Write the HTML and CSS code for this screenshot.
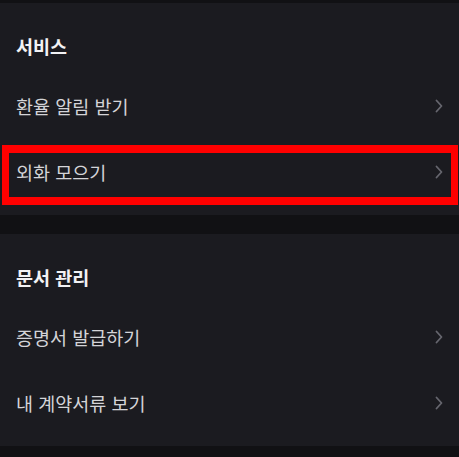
FILE: index.html
```html
<!DOCTYPE html>
<html lang="ko">
<head>
<meta charset="UTF-8">
<meta name="viewport" content="width=device-width, initial-scale=1.0">
<title>서비스</title>
<link rel="stylesheet" href="styles.css">
</head>
<body>

<div class="page">
    <!-- 서비스 -->
    <section class="card">
        <h2 class="card-title">서비스</h2>
        <a class="row" href="#">
            <span class="row-label">환율 알림 받기</span>
            <svg class="chevron" viewBox="0 0 8 14" width="8" height="14"><path d="M1.5 1.5 L6.5 7 L1.5 12.5"/></svg>
        </a>
        <a class="row row-selected" href="#">
            <span class="row-label">외화 모으기</span>
            <svg class="chevron" viewBox="0 0 8 14" width="8" height="14"><path d="M1.5 1.5 L6.5 7 L1.5 12.5"/></svg>
            <span class="highlight"></span>
        </a>
    </section>

    <!-- 문서 관리 -->
    <section class="card">
        <h2 class="card-title">문서 관리</h2>
        <a class="row" href="#">
            <span class="row-label">증명서 발급하기</span>
            <svg class="chevron" viewBox="0 0 8 14" width="8" height="14"><path d="M1.5 1.5 L6.5 7 L1.5 12.5"/></svg>
        </a>
        <a class="row" href="#">
            <span class="row-label">내 계약서류 보기</span>
            <svg class="chevron" viewBox="0 0 8 14" width="8" height="14"><path d="M1.5 1.5 L6.5 7 L1.5 12.5"/></svg>
        </a>
    </section>
</div>

</body>
</html>
```

FILE: styles.css
```css
body {
    margin: 0;
    background-color: #111114;
    font-family: "Noto Sans CJK KR", "Noto Sans", sans-serif;
}

.page {
    display: flex;
    flex-direction: column;
    gap: 19px;
    padding-top: 3px;
}

.card {
    background-color: #1b1b20;
    padding: 28px 0 10px;
}

.card-title {
    margin: 0 0 12px;
    padding: 0 16px;
    font-size: 18.5px;
    line-height: 30px;
    font-weight: 700;
    color: #f2f2f4;
}

.row {
    position: relative;
    display: flex;
    align-items: center;
    justify-content: space-between;
    height: 66px;
    padding: 0 16px;
    text-decoration: none;
}

.row-label {
    font-size: 18.5px;
    color: #d4d4d8;
}

.chevron {
    fill: none;
    stroke: #66666e;
    stroke-width: 1.8;
    stroke-linecap: round;
    stroke-linejoin: round;
}

/* red selection frame over the row */
.highlight {
    position: absolute;
    top: 6px;
    left: 2px;
    right: 1px;
    bottom: 0;
    border: 7px solid #ff0000;
    border-top-width: 8px;
    border-bottom-width: 8px;
}
```
